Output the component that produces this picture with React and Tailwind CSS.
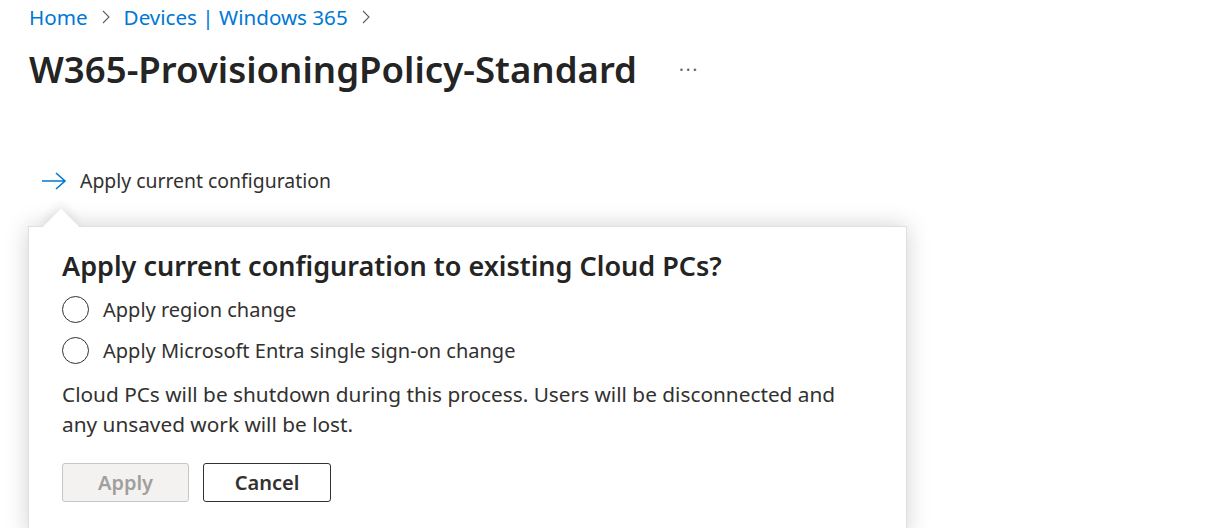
import React from 'react'

const font = { fontFamily: '"Noto Sans", "Open Sans", sans-serif' }

function Chevron() {
  return (
    <svg width="10" height="16" viewBox="0 0 10 16" className="mx-[13px]">
      <path d="M2 2 L8 8 L2 14" fill="none" stroke="#605e5c" strokeWidth="1.1" />
    </svg>
  )
}

function Radio({ label }) {
  return (
    <label className="flex items-center h-[41px]">
      <span className="w-[27px] h-[27px] rounded-full border-[1.5px] border-[#323130] bg-white shrink-0" />
      <span className="ml-[14px] text-[20px] text-[#323130]">{label}</span>
    </label>
  )
}

export default function App() {
  return (
    <div className="w-[1216px] h-[528px] bg-white overflow-hidden text-[#323130]" style={font}>
      <div className="pl-[29px]">
        <nav className="flex items-center h-[34px] text-[20.6px] text-[#0078d4]">
          <span>Home</span>
          <Chevron />
          <span>Devices | Windows 365</span>
          <Chevron />
        </nav>
        <div className="flex items-center h-[70px]">
          <h1 className="text-[36.6px] font-semibold text-[#242424]">W365-ProvisioningPolicy-Standard</h1>
          <span className="ml-[42px] text-[18px] text-[#605e5c] tracking-[2px]">···</span>
        </div>
      </div>

      <div className="flex items-center h-[40px] mt-[57px] pl-[40px]">
        <svg width="28" height="20" viewBox="0 0 28 20">
          <path d="M2 10 H25 M16 2 L25 10 L16 18" fill="none" stroke="#0078d4" strokeWidth="1.6" />
        </svg>
        <span className="ml-[12px] text-[19.4px] text-[#323130]">Apply current configuration</span>
      </div>

      <div className="relative ml-[28px] mt-[25px] w-[879px] h-[310px] bg-white border border-[#e1dfdd] shadow-[0_0_22px_rgba(0,0,0,0.18)]">
        <div className="absolute left-[19px] top-[-13px] w-[26px] h-[26px] bg-white rotate-45 shadow-[-4px_-4px_10px_rgba(0,0,0,0.08)]" />
        <div className="relative bg-white pl-[33px] pt-[20px]">
          <h2 className="text-[27px] font-semibold text-[#242424] leading-[38px]">Apply current configuration to existing Cloud PCs?</h2>
          <div className="mt-[4px]">
            <Radio label="Apply region change" />
            <Radio label="Apply Microsoft Entra single sign-on change" />
          </div>
          <p className="mt-[8px] text-[20.8px] leading-[30px] text-[#323130] w-[800px]">
            Cloud PCs will be shutdown during this process. Users will be disconnected and any unsaved work will be lost.
          </p>
          <div className="flex gap-[14px] mt-[24px]">
            <button className="w-[127px] h-[39px] rounded-[3px] border border-[#c8c6c4] bg-[#f3f2f1] text-[20px] font-semibold text-[#a19f9d]">Apply</button>
            <button className="w-[128px] h-[39px] rounded-[3px] border border-[#323130] bg-white text-[20px] font-semibold text-[#323130]">Cancel</button>
          </div>
        </div>
      </div>
    </div>
  )
}
